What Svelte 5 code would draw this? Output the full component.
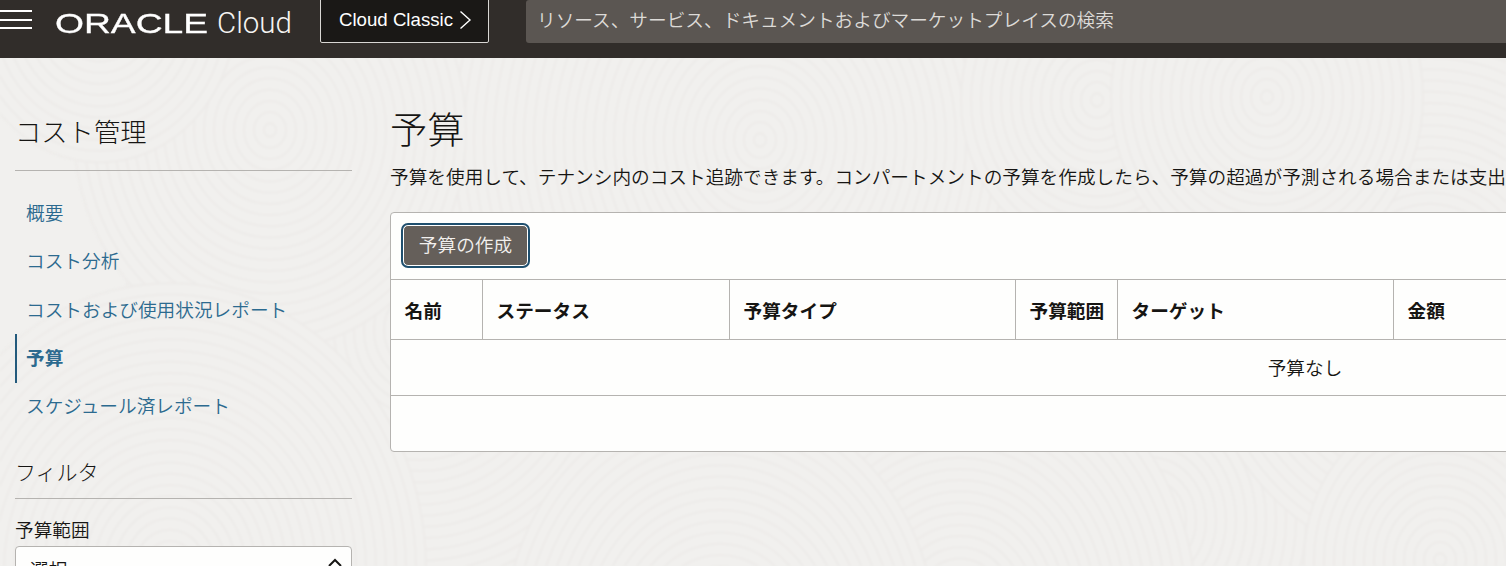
<script>
  const navItems = [
    { label: '概要' },
    { label: 'コスト分析' },
    { label: 'コストおよび使用状況レポート' },
    { label: '予算', active: true },
    { label: 'スケジュール済レポート' }
  ]

  const columns = [
    { label: '名前', width: 92 },
    { label: 'ステータス', width: 247 },
    { label: '予算タイプ', width: 286 },
    { label: '予算範囲', width: 102 },
    { label: 'ターゲット', width: 276 },
    { label: '金額', width: 827 }
  ]

  // fingerprint texture of the console: later swirls cover the earlier ones
  const swirls = [
    { x: 420, y: 330, count: 30 },
    { x: 1150, y: 520, count: 30 },
    { x: 760, y: 140, count: 32 },
    { x: 1430, y: 300, count: 24 },
    { x: 270, y: 130, count: 20 },
    { x: 100, y: 10, count: 14 },
    { x: 170, y: 570, count: 26 },
    { x: 960, y: 610, count: 24 },
    { x: 720, y: 640, count: 22 },
    { x: 1097, y: 100, count: 14 },
    { x: 1267, y: 97, count: 16 },
    { x: 1440, y: 560, count: 14 }
  ]

  function rings(count) {
    return Array.from({ length: count }, (_, i) => 6 + (count - 1 - i) * 10)
  }
</script>

<div class="shell">
  <svg class="texture" width="1506" height="566" aria-hidden="true">
    {#each swirls as s}
      {#each rings(s.count) as r}
        <ellipse cx={s.x} cy={s.y} rx={r} ry={r * 1.12} />
      {/each}
    {/each}
  </svg>

  <header class="topbar">
    <button class="menu" aria-label="メニュー">
      <span></span><span></span><span></span>
    </button>
    <div class="brand">
      <span class="oracle"><span>ORACLE</span></span>
      <span class="cloud">Cloud</span>
    </div>
    <button class="classic">
      Cloud Classic
      <svg width="13" height="20" viewBox="0 0 13 20"><path d="M1.5 1.5 L11 10 L1.5 18.5" /></svg>
    </button>
    <div class="search">リソース、サービス、ドキュメントおよびマーケットプレイスの検索</div>
  </header>

  <div class="page">
    <aside class="sidebar">
      <h2 class="side-title">コスト管理</h2>
      <nav class="nav">
        {#each navItems as item}
          <a href="#top" class="nav-item" class:active={item.active}>{item.label}</a>
        {/each}
      </nav>
      <h3 class="filter-title">フィルタ</h3>
      <div class="field-label">予算範囲</div>
      <div class="select">
        <span>選択</span>
        <svg width="16" height="10" viewBox="0 0 16 10"><path d="M2 8 L8 2 L14 8" /></svg>
      </div>
    </aside>

    <main class="content">
      <h1>予算</h1>
      <p class="desc">予算を使用して、テナンシ内のコスト追跡できます。コンパートメントの予算を作成したら、予算の超過が予測される場合または支出</p>
      <section class="card">
        <div class="toolbar">
          <button class="create">予算の作成</button>
        </div>
        <div class="head-row">
          {#each columns as col}
            <div class="head-cell" style="width: {col.width}px">{col.label}</div>
          {/each}
        </div>
        <div class="empty">予算なし</div>
        <div class="foot"></div>
      </section>
    </main>
  </div>
</div>

<style>
  :global(body) {
    overflow: hidden;
    background: #f1f0ee;
  }

  .shell {
    position: relative;
    width: 1506px;
    height: 566px;
    overflow: hidden;
    font-family: "Noto Sans CJK JP", "Liberation Sans", sans-serif;
    font-weight: 350;
    color: #161513;
  }

  .texture {
    position: absolute;
    left: 0;
    top: 0;
    filter: blur(0.8px);
  }

  .texture ellipse {
    fill: #f1f0ee;
    stroke: #edebe9;
    stroke-width: 2;
  }

  .topbar {
    position: relative;
    height: 58px;
    background: #312d2a;
    display: flex;
    align-items: flex-end;
    padding-bottom: 15px;
    box-sizing: border-box;
  }

  .menu {
    width: 32px;
    height: 19px;
    margin-bottom: 14px;
    padding: 0;
    border: none;
    background: none;
    display: flex;
    flex-direction: column;
    justify-content: space-between;
  }

  .menu span {
    display: block;
    height: 2px;
    background: #fff;
  }

  .brand {
    margin-left: 23px;
    width: 265px;
    height: 43px;
    display: flex;
    align-items: center;
    color: #fff;
    font-family: "Liberation Sans", sans-serif;
    font-weight: 400;
  }

  .oracle {
    display: block;
    width: 153px;
    font-size: 28px;
    line-height: 28px;
    margin-top: 5px;
    -webkit-text-stroke: 0.3px #fff;
  }

  .oracle span {
    display: inline-block;
    transform: scaleX(1.33);
    transform-origin: left center;
  }

  .cloud {
    margin-left: 9px;
    font-family: Roboto, "Liberation Sans", sans-serif;
    font-size: 29.5px;
    margin-top: 3px;
    color: #f5f4f2;
    font-weight: 300;
  }

  .classic {
    width: 169px;
    height: 60px;
    margin-top: -17px;
    background: #1a1816;
    border: 1px solid #d8d6d3;
    border-radius: 2px;
    color: #fff;
    font-family: "Liberation Sans", sans-serif;
    font-size: 18.67px;
    display: flex;
    align-items: flex-end;
    justify-content: center;
    gap: 6px;
    padding: 0 0 11px 2px;
    box-sizing: border-box;
  }

  .classic svg {
    margin-bottom: 1px;
  }

  .classic path {
    fill: none;
    stroke: #fff;
    stroke-width: 1.4;
  }

  .search {
    margin-left: 37px;
    flex: 1;
    height: 43px;
    background: #5b5652;
    border-radius: 3px 0 0 3px;
    color: #dddbd8;
    font-size: 18.67px;
    padding: 0 0 6px 11px;
    box-sizing: border-box;
    display: flex;
    align-items: center;
  }

  .page {
    position: relative;
    display: flex;
    align-items: flex-start;
  }

  .sidebar {
    width: 337px;
    margin-left: 15px;
    flex-shrink: 0;
  }

  .side-title {
    margin: 53px 0 0;
    height: 59px;
    border-bottom: 1px solid #b5b3b0;
    font-size: 26.3px;
    font-weight: 300;
    line-height: 40px;
  }

  .nav {
    margin-top: 18px;
    display: flex;
    flex-direction: column;
  }

  .nav-item {
    height: 48.3px;
    display: flex;
    align-items: center;
    padding: 0 0 3px 11px;
    font-size: 18.67px;
    color: #2c6a8f;
    text-decoration: none;
    box-sizing: border-box;
  }

  .nav-item.active {
    height: 49px;
    margin-bottom: -0.7px;
    font-weight: 700;
    border-left: 2px solid #235a7c;
    padding-left: 9px;
  }

  .filter-title {
    margin: 23px 0 0;
    height: 44px;
    border-bottom: 1px solid #b5b3b0;
    font-size: 21px;
    font-weight: 300;
    line-height: 34px;
  }

  .field-label {
    margin-top: 16px;
    font-size: 18.67px;
    line-height: 28px;
  }

  .select {
    margin-top: 3px;
    height: 36px;
    background: #fefefd;
    border: 1px solid #b5b3b0;
    border-radius: 4px;
    display: flex;
    align-items: flex-start;
    justify-content: space-between;
    padding: 8px 8px 8px 14px;
    box-sizing: border-box;
    font-size: 18.67px;
  }

  .select svg {
    margin-top: 3px;
  }

  .select path {
    fill: none;
    stroke: #161513;
    stroke-width: 2;
  }

  .content {
    width: 1830px;
    flex-shrink: 0;
    margin-left: 38px;
  }

  h1 {
    margin: 44px 0 0;
    font-size: 37.33px;
    font-weight: 300;
    line-height: 52px;
  }

  .desc {
    margin: 8px 0 0;
    font-size: 18.67px;
    line-height: 28px;
    white-space: nowrap;
  }

  .card {
    margin-top: 22px;
    background: #fefefd;
    border: 1px solid #b5b3b0;
    border-radius: 4px;
    box-sizing: border-box;
    height: 240px;
  }

  .toolbar {
    height: 67px;
    padding: 12px;
    box-sizing: border-box;
    border-bottom: 1px solid #b5b3b0;
  }

  .create {
    display: block;
    width: 125px;
    height: 41px;
    background: #655f5a;
    color: #f2f0ee;
    border: 1px solid #fff;
    border-radius: 5px;
    outline: 2px solid #1f4f6e;
    outline-offset: 0;
    font-family: inherit;
    font-weight: 350;
    font-size: 18.67px;
    padding: 0 0 5px;
  }

  .head-row {
    display: flex;
    height: 60px;
    border-bottom: 1px solid #b5b3b0;
    box-sizing: border-box;
  }

  .head-cell {
    flex-shrink: 0;
    box-sizing: border-box;
    border-right: 1px solid #b5b3b0;
    padding: 0 0 0 13.5px;
    font-size: 18.67px;
    font-weight: 700;
    display: flex;
    align-items: center;
    white-space: nowrap;
  }

  .empty {
    height: 56px;
    display: flex;
    align-items: center;
    justify-content: center;
    padding-bottom: 2px;
    font-size: 18.67px;
    border-bottom: 1px solid #b5b3b0;
    box-sizing: border-box;
  }
</style>
